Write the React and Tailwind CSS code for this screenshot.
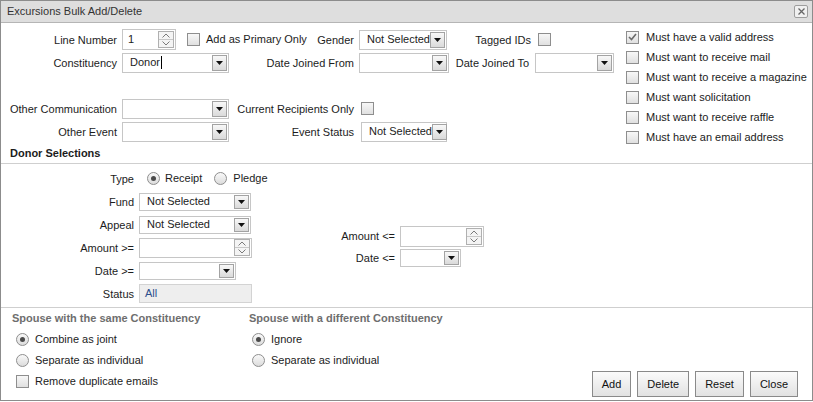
function Check({ checked, className = '' }) {
  return (
    <span
      className={`flex h-[13px] w-[13px] shrink-0 items-center justify-center border border-[#8e8e8e] bg-linear-to-b from-[#f7f7f7] to-[#e0e0e0] ${className}`}
    >
      {checked && (
        <svg width="9" height="8" viewBox="0 0 9 8">
          <path d="M1 4 L3.5 6.5 L8 1" fill="none" stroke="#6b6b6b" strokeWidth="1.6" />
        </svg>
      )}
    </span>
  );
}

function Radio({ checked, className = '' }) {
  return (
    <span
      className={`flex h-[13px] w-[13px] shrink-0 items-center justify-center rounded-full border border-[#8e8e8e] bg-linear-to-b from-[#f9f9f9] to-[#dcdcdc] ${className}`}
    >
      {checked && <span className="h-[5px] w-[5px] rounded-full bg-[#4a4a4a]" />}
    </span>
  );
}

function Select({ value, className = '', arrow = 'h-[16px]', caret }) {
  return (
    <div
      className={`flex shrink-0 items-center justify-between border border-[#c6c6c6] bg-white pl-[7px] pr-[1px] ${className}`}
    >
      <span className="flex items-center whitespace-nowrap">
        {value}
        {caret && <span className="ml-[1px] h-[13px] w-[1px] bg-black" />}
      </span>
      <span
        className={`flex w-[15px] shrink-0 items-center justify-center border border-[#a3a3a3] bg-linear-to-b from-[#f8f8f8] to-[#dadada] ${arrow}`}
      >
        <svg width="7" height="4" viewBox="0 0 7 4">
          <path d="M0 0 H7 L3.5 4 Z" fill="#111" />
        </svg>
      </span>
    </div>
  );
}

function Spin({ value, className = '' }) {
  return (
    <div
      className={`flex shrink-0 items-center justify-between border border-[#c6c6c6] bg-white pl-[5px] pr-[1px] ${className}`}
    >
      <span>{value}</span>
      <span className="flex h-[17px] w-[16px] shrink-0 flex-col border border-[#b0b0b0] bg-[#f4f4f4]">
        <span className="flex flex-1 items-center justify-center border-b border-[#c8c8c8]">
          <svg width="8" height="5" viewBox="0 0 8 5">
            <path d="M0.5 4.5 L4 1 L7.5 4.5" fill="none" stroke="#7a7a7a" />
          </svg>
        </span>
        <span className="flex flex-1 items-center justify-center">
          <svg width="8" height="5" viewBox="0 0 8 5">
            <path d="M0.5 0.5 L4 4 L7.5 0.5" fill="none" stroke="#7a7a7a" />
          </svg>
        </span>
      </span>
    </div>
  );
}

function Label({ children, className = 'pr-[5px]' }) {
  return <div className={`whitespace-nowrap pt-[1px] text-right ${className}`}>{children}</div>;
}

function Btn({ children }) {
  return (
    <button className="h-[26px] border border-[#8a8a8a] bg-linear-to-b from-[#fbfbfb] to-[#e2e2e2] px-[9px] text-[11px] text-[#111]">
      {children}
    </button>
  );
}

const MUSTS = [
  { label: 'Must have a valid address', checked: true },
  { label: 'Must want to receive mail' },
  { label: 'Must want to receive a magazine' },
  { label: 'Must want solicitation' },
  { label: 'Must want to receive raffle' },
  { label: 'Must have an email address' },
];

export default function App() {
  return (
    <div className="h-[402px] w-[813px] overflow-hidden bg-white font-['Liberation_Sans',Arial,sans-serif] text-[11px] leading-[13px] text-[#1c1c1c]">
      <div className="flex h-[401px] flex-col border border-[#8c8c8c]">
        {/* Title bar */}
        <div className="flex h-[22px] shrink-0 items-center justify-between border-b border-[#b5b5b5] bg-[#dedede] pl-[6px] pr-[4px] text-[#333]">
          <span>Excursions Bulk Add/Delete</span>
          <span className="flex h-[13px] w-[14px] items-center justify-center rounded-[2px] border border-[#9d9d9d] bg-[#f0f0f0]">
            <svg width="7" height="7" viewBox="0 0 7 7">
              <path d="M0.5 0.5 L6.5 6.5 M6.5 0.5 L0.5 6.5" stroke="#666" strokeWidth="1.3" />
            </svg>
          </span>
        </div>

        {/* Top filters */}
        <div className="flex h-[120px] shrink-0 pt-[4px]">
          <div className="mt-[1px] grid grid-cols-[121px_106px_131px_90px_86px_80px] auto-rows-[23px] items-center self-start">
            <Label>Line Number</Label>
            <div className="flex items-center">
              <Spin value="1" className="h-[21px] w-[54px]" />
              <Check className="ml-[11px]" />
              <span className="ml-[6px] whitespace-nowrap">Add as Primary Only</span>
            </div>
            <Label>Gender</Label>
            <Select value="Not Selected" className="h-[20px] w-[88px]" />
            <Label className="pr-[4px]">Tagged IDs</Label>
            <Check className="ml-[3px]" />

            <Label>Constituency</Label>
            <Select value="Donor" caret className="h-[20px] w-[107px]" />
            <Label>Date Joined From</Label>
            <Select className="h-[20px] w-[90px]" />
            <Label className="pr-[6px]">Date Joined To</Label>
            <Select className="h-[20px] w-[79px]" />

            <div className="col-span-6" />

            <Label>Other Communication</Label>
            <Select className="h-[20px] w-[107px]" />
            <Label>Current Recipients Only</Label>
            <Check className="ml-[2px]" />
            <div />
            <div />

            <Label>Other Event</Label>
            <Select className="h-[20px] w-[107px]" />
            <Label>Event Status</Label>
            <Select value="Not Selected" className="ml-[2px] h-[20px] w-[86px]" />
            <div />
            <div />
          </div>

          <div className="ml-[11px] flex flex-col self-start">
            {MUSTS.map((m) => (
              <div key={m.label} className="flex h-[20px] items-center">
                <Check checked={m.checked} />
                <span className="ml-[7px] whitespace-nowrap">{m.label}</span>
              </div>
            ))}
          </div>
        </div>

        {/* Donor selections */}
        <div className="flex h-[21px] shrink-0 items-center border-b border-[#cfcfcf] pl-[9px] font-bold">
          Donor Selections
        </div>
        <div className="flex shrink-0 border-b border-[#cfcfcf] pb-[2px] pt-[3px]">
          <div className="grid grid-cols-[138px_113px] auto-rows-[23px] items-center">
            <Label>Type</Label>
            <div className="flex items-center pl-[8px]">
              <Radio checked />
              <span className="ml-[5px]">Receipt</span>
              <Radio className="ml-[12px]" />
              <span className="ml-[6px]">Pledge</span>
            </div>
            <Label>Fund</Label>
            <Select value="Not Selected" arrow="h-[14px]" className="h-[18px] w-[112px]" />
            <Label>Appeal</Label>
            <Select value="Not Selected" arrow="h-[14px]" className="h-[18px] w-[112px]" />
            <Label>Amount &gt;=</Label>
            <Spin className="h-[20px] w-[113px]" />
            <Label>Date &gt;=</Label>
            <Select arrow="h-[14px]" className="h-[18px] w-[97px]" />
            <Label>Status</Label>
            <div className="flex h-[19px] w-[113px] items-center border border-[#d3d3d3] bg-[#eeeeee] pl-[5px] text-[#2c4f8c]">
              All
            </div>
          </div>

          <div className="mt-[58px] grid grid-cols-[148px_auto] auto-rows-[22px] items-center self-start">
            <Label>Amount &lt;=</Label>
            <Spin className="h-[21px] w-[84px]" />
            <Label>Date &lt;=</Label>
            <Select arrow="h-[14px]" className="h-[18px] w-[61px]" />
          </div>
        </div>

        {/* Spouse options + actions */}
        <div className="flex flex-1">
          <div className="flex w-[248px] shrink-0 flex-col pl-[11px]">
            <div className="flex h-[21px] items-center font-bold text-[#6e6e6e]">
              Spouse with the same Constituency
            </div>
            <div className="flex h-[21px] items-center">
              <Radio checked className="ml-[4px]" />
              <span className="ml-[6px]">Combine as joint</span>
            </div>
            <div className="flex h-[21px] items-center">
              <Radio className="ml-[4px]" />
              <span className="ml-[6px]">Separate as individual</span>
            </div>
            <div className="flex h-[21px] items-center">
              <Check className="ml-[4px]" />
              <span className="ml-[6px]">Remove duplicate emails</span>
            </div>
          </div>

          <div className="flex flex-col">
            <div className="flex h-[21px] items-center font-bold text-[#6e6e6e]">
              Spouse with a different Constituency
            </div>
            <div className="flex h-[21px] items-center">
              <Radio checked className="ml-[3px]" />
              <span className="ml-[6px]">Ignore</span>
            </div>
            <div className="flex h-[21px] items-center">
              <Radio className="ml-[3px]" />
              <span className="ml-[6px]">Separate as individual</span>
            </div>
          </div>

          <div className="mb-[3px] ml-auto mr-[14px] flex gap-[6px] self-end">
            <Btn>Add</Btn>
            <Btn>Delete</Btn>
            <Btn>Reset</Btn>
            <Btn>Close</Btn>
          </div>
        </div>
      </div>
    </div>
  );
}
